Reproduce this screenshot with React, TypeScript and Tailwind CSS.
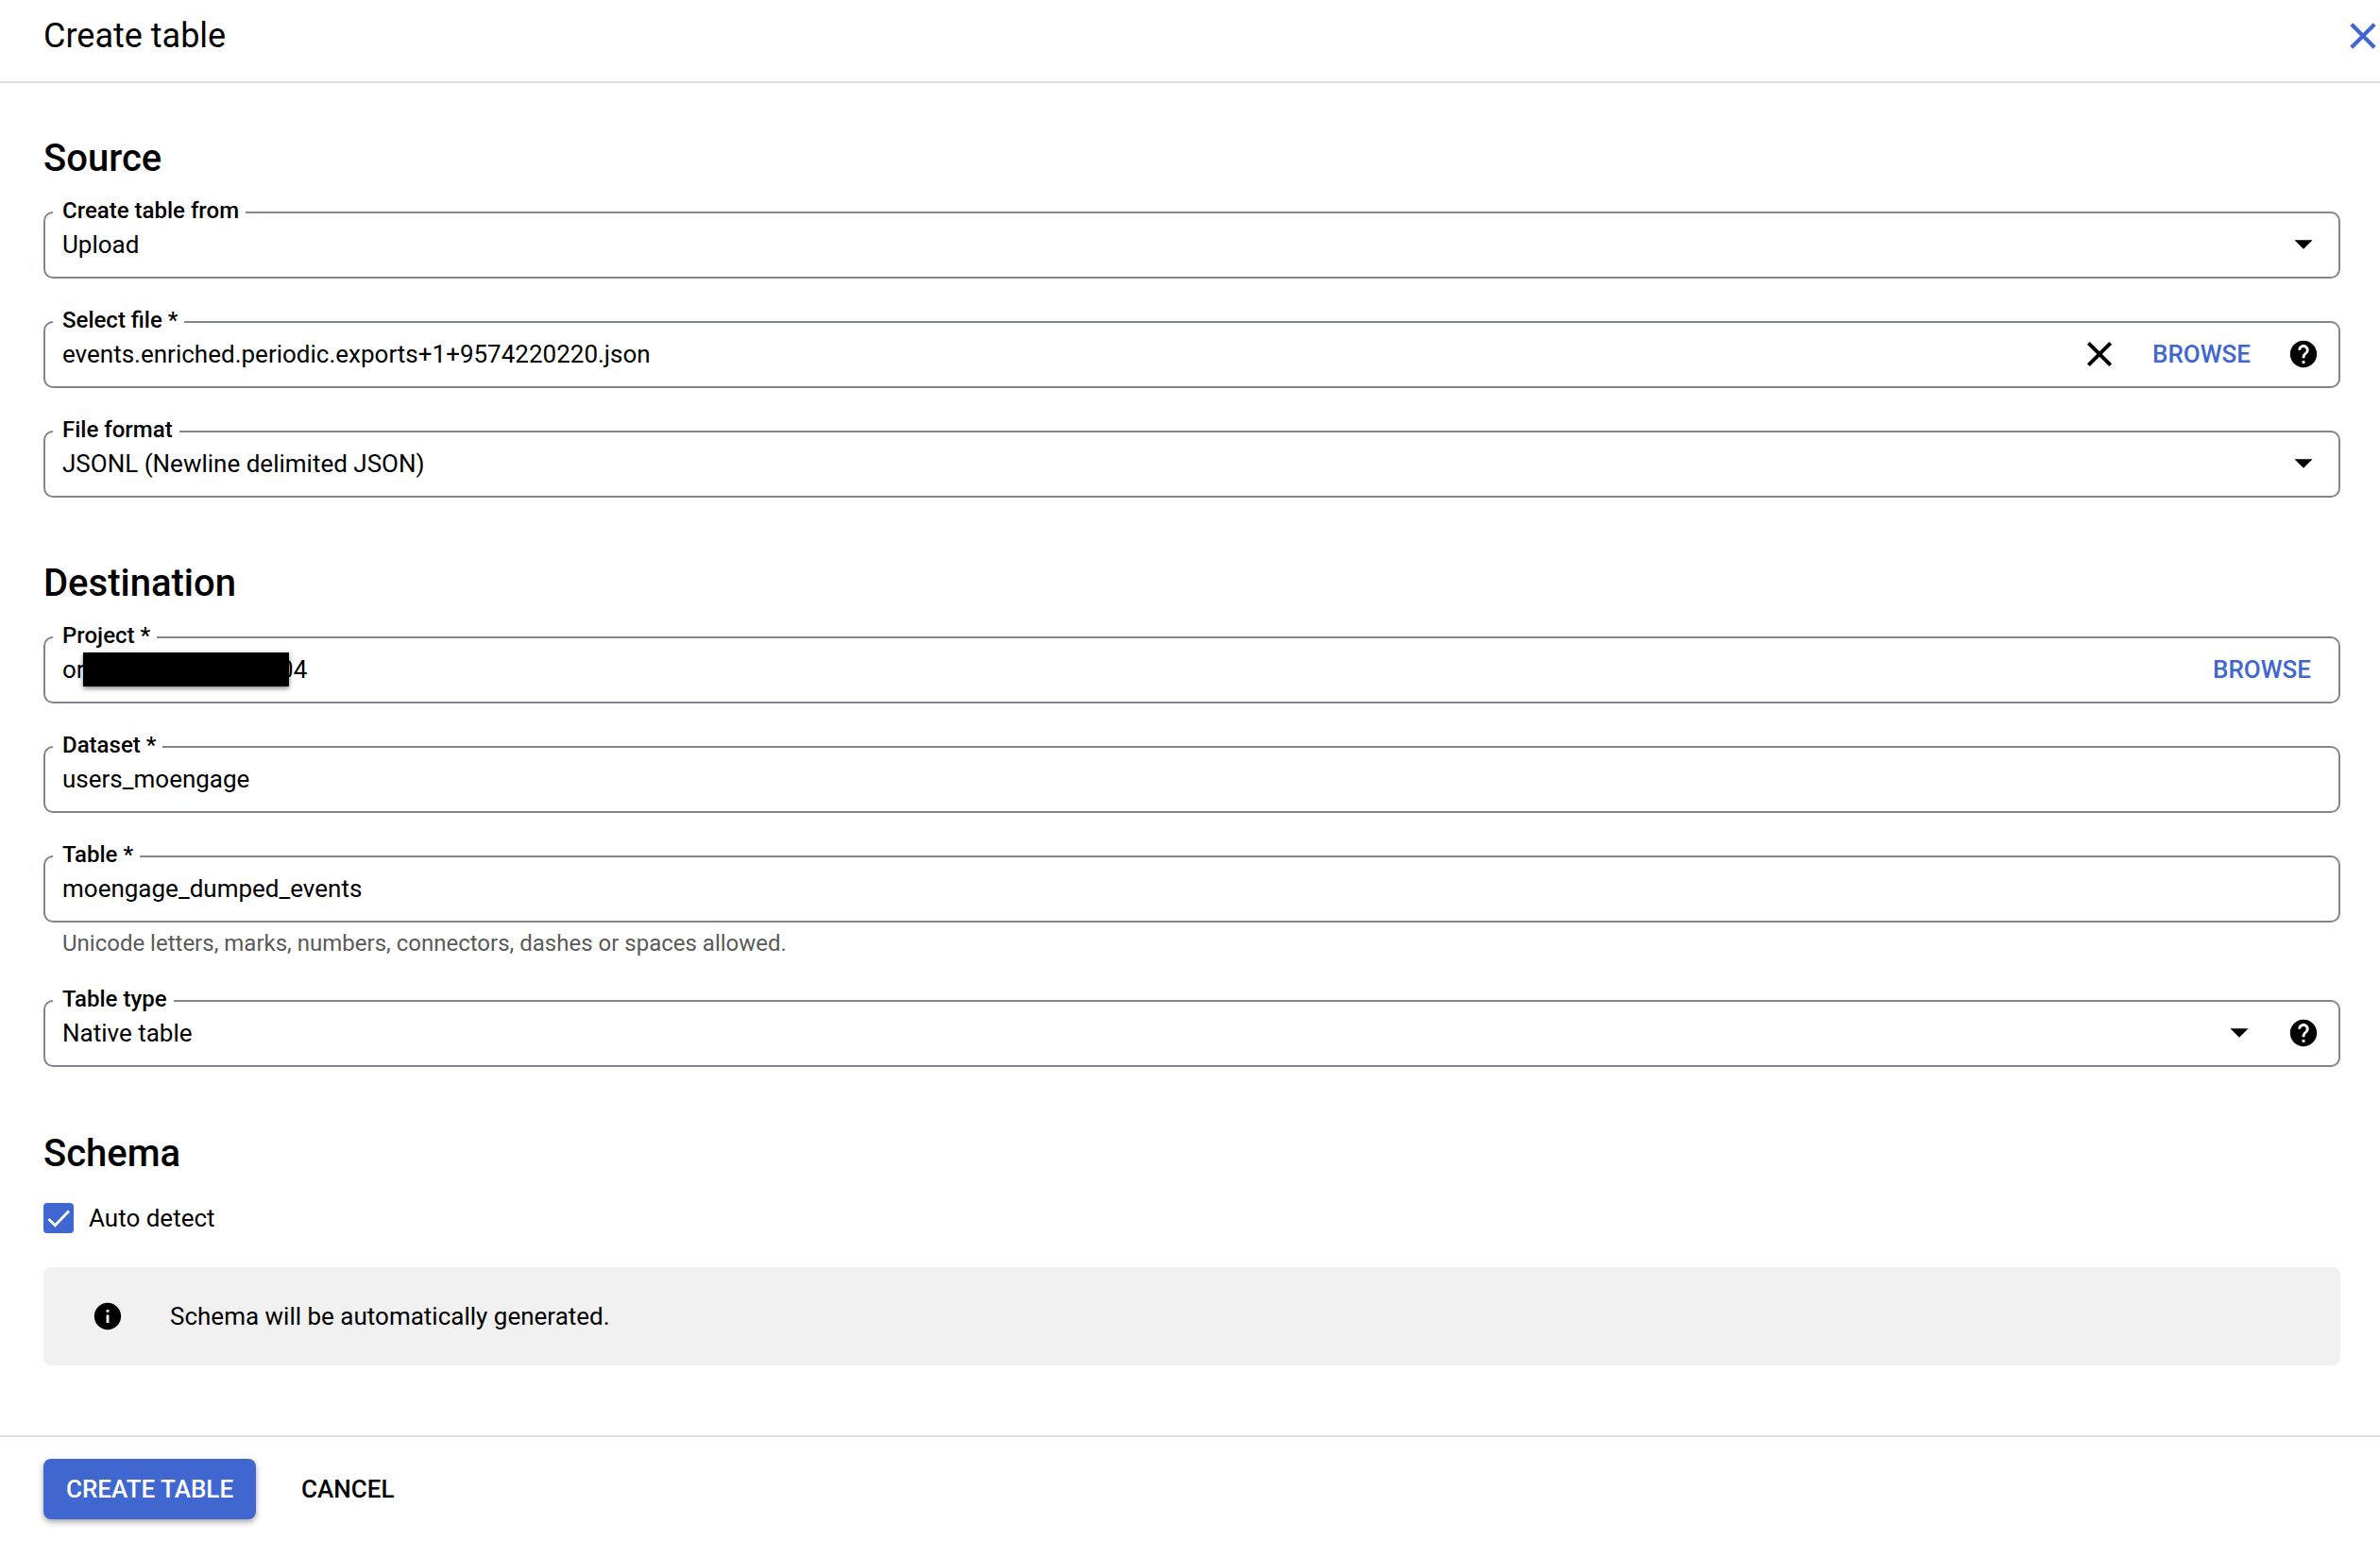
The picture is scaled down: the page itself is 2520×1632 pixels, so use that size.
import type { ReactNode } from "react";

function CloseIcon({ className }: { className: string }) {
  return (
    <svg viewBox="0 0 24 24" fill="none" stroke="currentColor" strokeWidth="2.1" aria-hidden="true" className={className}>
      <path d="M5.9 5.900l12.2 12.200M18.1 5.900L5.900 18.100" />
    </svg>
  );
}

function ArrowIcon() {
  return (
    <svg viewBox="0 0 24 24" aria-hidden="true" className="pointer-events-none size-[46px] shrink-0">
      <path d="M7 9.5l5 5 5-5z" />
    </svg>
  );
}

function HelpButton({ label }: { label: string }) {
  return (
    <button type="button" aria-label={label} className="flex w-[46px] shrink-0 justify-center">
      <svg viewBox="0 0 24 24" aria-hidden="true" className="size-[34px]">
        <path d="M12 2C6.48 2 2 6.48 2 12s4.48 10 10 10 10-4.48 10-10S17.52 2 12 2zm1 17h-2v-2h2v2zm2.07-7.75l-.9.92C13.45 12.9 13 13.5 13 15h-2v-.5c0-1.1.45-2.1 1.17-2.83l1.24-1.26c.37-.36.59-.86.59-1.41 0-1.1-.9-2-2-2s-2 .9-2 2H8c0-2.21 1.79-4 4-4s4 1.79 4 4c0 .88-.36 1.68-.93 2.25z" />
      </svg>
    </button>
  );
}

function BrowseButton() {
  return (
    <button type="button" className="shrink-0 pr-[15px] pl-4 text-[26px] leading-10 font-medium text-[#4066cf]">
      BROWSE
    </button>
  );
}

function Field({ id, label, children }: { id: string; label: string; children: ReactNode }) {
  return (
    <fieldset className="min-w-0 rounded-[10px] border-2 border-[#80868b] pr-[14px] pb-[14px] pl-2">
      <legend className="pr-[7px] pb-1 pl-[10px] text-[24px] leading-6 font-medium">
        <label htmlFor={id}>{label}</label>
      </legend>
      <div className="flex h-10 items-center pl-[10px]">{children}</div>
    </fieldset>
  );
}

function TextInput({ id, value, describedBy }: { id: string; value: string; describedBy?: string }) {
  return (
    <input
      id={id}
      type="text"
      defaultValue={value}
      aria-describedby={describedBy}
      className="h-10 min-w-0 flex-1 bg-transparent text-[26px] leading-10 outline-none"
    />
  );
}

function SelectInput({ id, value }: { id: string; value: string }) {
  return (
    <>
      <select
        id={id}
        defaultValue={value}
        className="h-10 min-w-0 flex-1 appearance-none bg-transparent text-[26px] leading-10 outline-none"
      >
        <option>{value}</option>
      </select>
      <ArrowIcon />
    </>
  );
}

function Heading({ children }: { children: ReactNode }) {
  return <h2 className="text-[40px] leading-[48px] font-medium">{children}</h2>;
}

// The middle of the project id is blank and stays covered by the bar.
const PROJECT_ID = "or" + "\u00a0".repeat(32) + "04";

export default function App() {
  return (
    <div className="flex min-h-screen flex-col bg-white font-[Roboto,sans-serif] text-black">
      <header className="flex h-[88px] items-center justify-between border-b-2 border-[#e0e0e0] pb-2.5 pl-[46px]">
        <h1 className="text-[36px] leading-[48px]">Create table</h1>
        <button type="button" aria-label="Close" className="-mr-[6px] text-[#4066cf]">
          <CloseIcon className="size-12" />
        </button>
      </header>

      <main className="flex-1 pt-14 pr-[42px] pb-[74px] pl-[46px]">
        <section>
          <Heading>Source</Heading>
          <div className="mt-[19px] flex flex-col gap-8">
            <Field id="from" label="Create table from">
              <SelectInput id="from" value="Upload" />
            </Field>
            <Field id="file" label="Select file *">
              <TextInput id="file" value="events.enriched.periodic.exports+1+9574220220.json" />
              <button type="button" aria-label="Clear file" className="mr-[17px] shrink-0">
                <CloseIcon className="size-[46px]" />
              </button>
              <BrowseButton />
              <div className="ml-[18px] flex">
                <HelpButton label="Help for select file" />
              </div>
            </Field>
            <Field id="format" label="File format">
              <SelectInput id="format" value="JSONL (Newline delimited JSON)" />
            </Field>
          </div>
        </section>

        <section className="mt-[67px]">
          <Heading>Destination</Heading>
          <div className="mt-[19px] flex flex-col gap-8">
            <Field id="project" label="Project *">
              <div className="relative flex flex-1">
                <TextInput id="project" value={PROJECT_ID} />
                <span className="absolute top-[2px] left-[22px] h-9 w-[218px] bg-black shadow-[0_2px_5px_rgba(0,0,0,0.5)]" />
              </div>
              <BrowseButton />
            </Field>
            <Field id="dataset" label="Dataset *">
              <TextInput id="dataset" value="users_moengage" />
            </Field>
            <div>
              <Field id="table" label="Table *">
                <TextInput id="table" value="moengage_dumped_events" describedBy="table-hint" />
              </Field>
              <p id="table-hint" className="mt-[7px] pl-5 text-[24px] leading-[30px] text-[#5a5a5a]">
                Unicode letters, marks, numbers, connectors, dashes or spaces allowed.
              </p>
            </div>
            <Field id="type" label="Table type">
              <SelectInput id="type" value="Native table" />
              <div className="ml-[22px] flex">
                <HelpButton label="Help for table type" />
              </div>
            </Field>
          </div>
        </section>

        <section className="mt-[68px]">
          <Heading>Schema</Heading>
          <div className="mt-7 flex items-center gap-4">
            <div className="relative size-8">
              <input
                id="auto"
                type="checkbox"
                defaultChecked
                className="block size-8 appearance-none rounded-[4px] bg-[#4066cf]"
              />
              <svg viewBox="0 0 32 32" aria-hidden="true" className="pointer-events-none absolute inset-0 size-8">
                <path d="M5.5 17l6.800 6.800L27 8.500" fill="none" stroke="#fff" strokeWidth="2.8" />
              </svg>
            </div>
            <label htmlFor="auto" className="text-[26px] leading-8">
              Auto detect
            </label>
          </div>
          <div className="mt-9 flex h-[104px] items-center rounded-lg bg-[#f1f1f1] pl-[51px]">
            <svg viewBox="0 0 24 24" aria-hidden="true" className="size-[34px]">
              <path d="M12 2C6.48 2 2 6.48 2 12s4.48 10 10 10 10-4.48 10-10S17.52 2 12 2zm1 15h-2v-6h2v6zm0-8h-2V7h2v2z" />
            </svg>
            <p className="ml-[49px] text-[26px] leading-8">Schema will be automatically generated.</p>
          </div>
        </section>
      </main>

      <footer className="flex items-center gap-6 border-t-2 border-[#e0e0e0] py-[23px] pl-[46px] text-[26px] font-medium">
        <button
          type="button"
          className="h-16 rounded-lg bg-[#4066cf] px-6 text-white shadow-[0_3px_6px_rgba(0,0,0,0.35)]"
        >
          CREATE TABLE
        </button>
        <button type="button" className="h-16 px-6">
          CANCEL
        </button>
      </footer>
    </div>
  );
}
